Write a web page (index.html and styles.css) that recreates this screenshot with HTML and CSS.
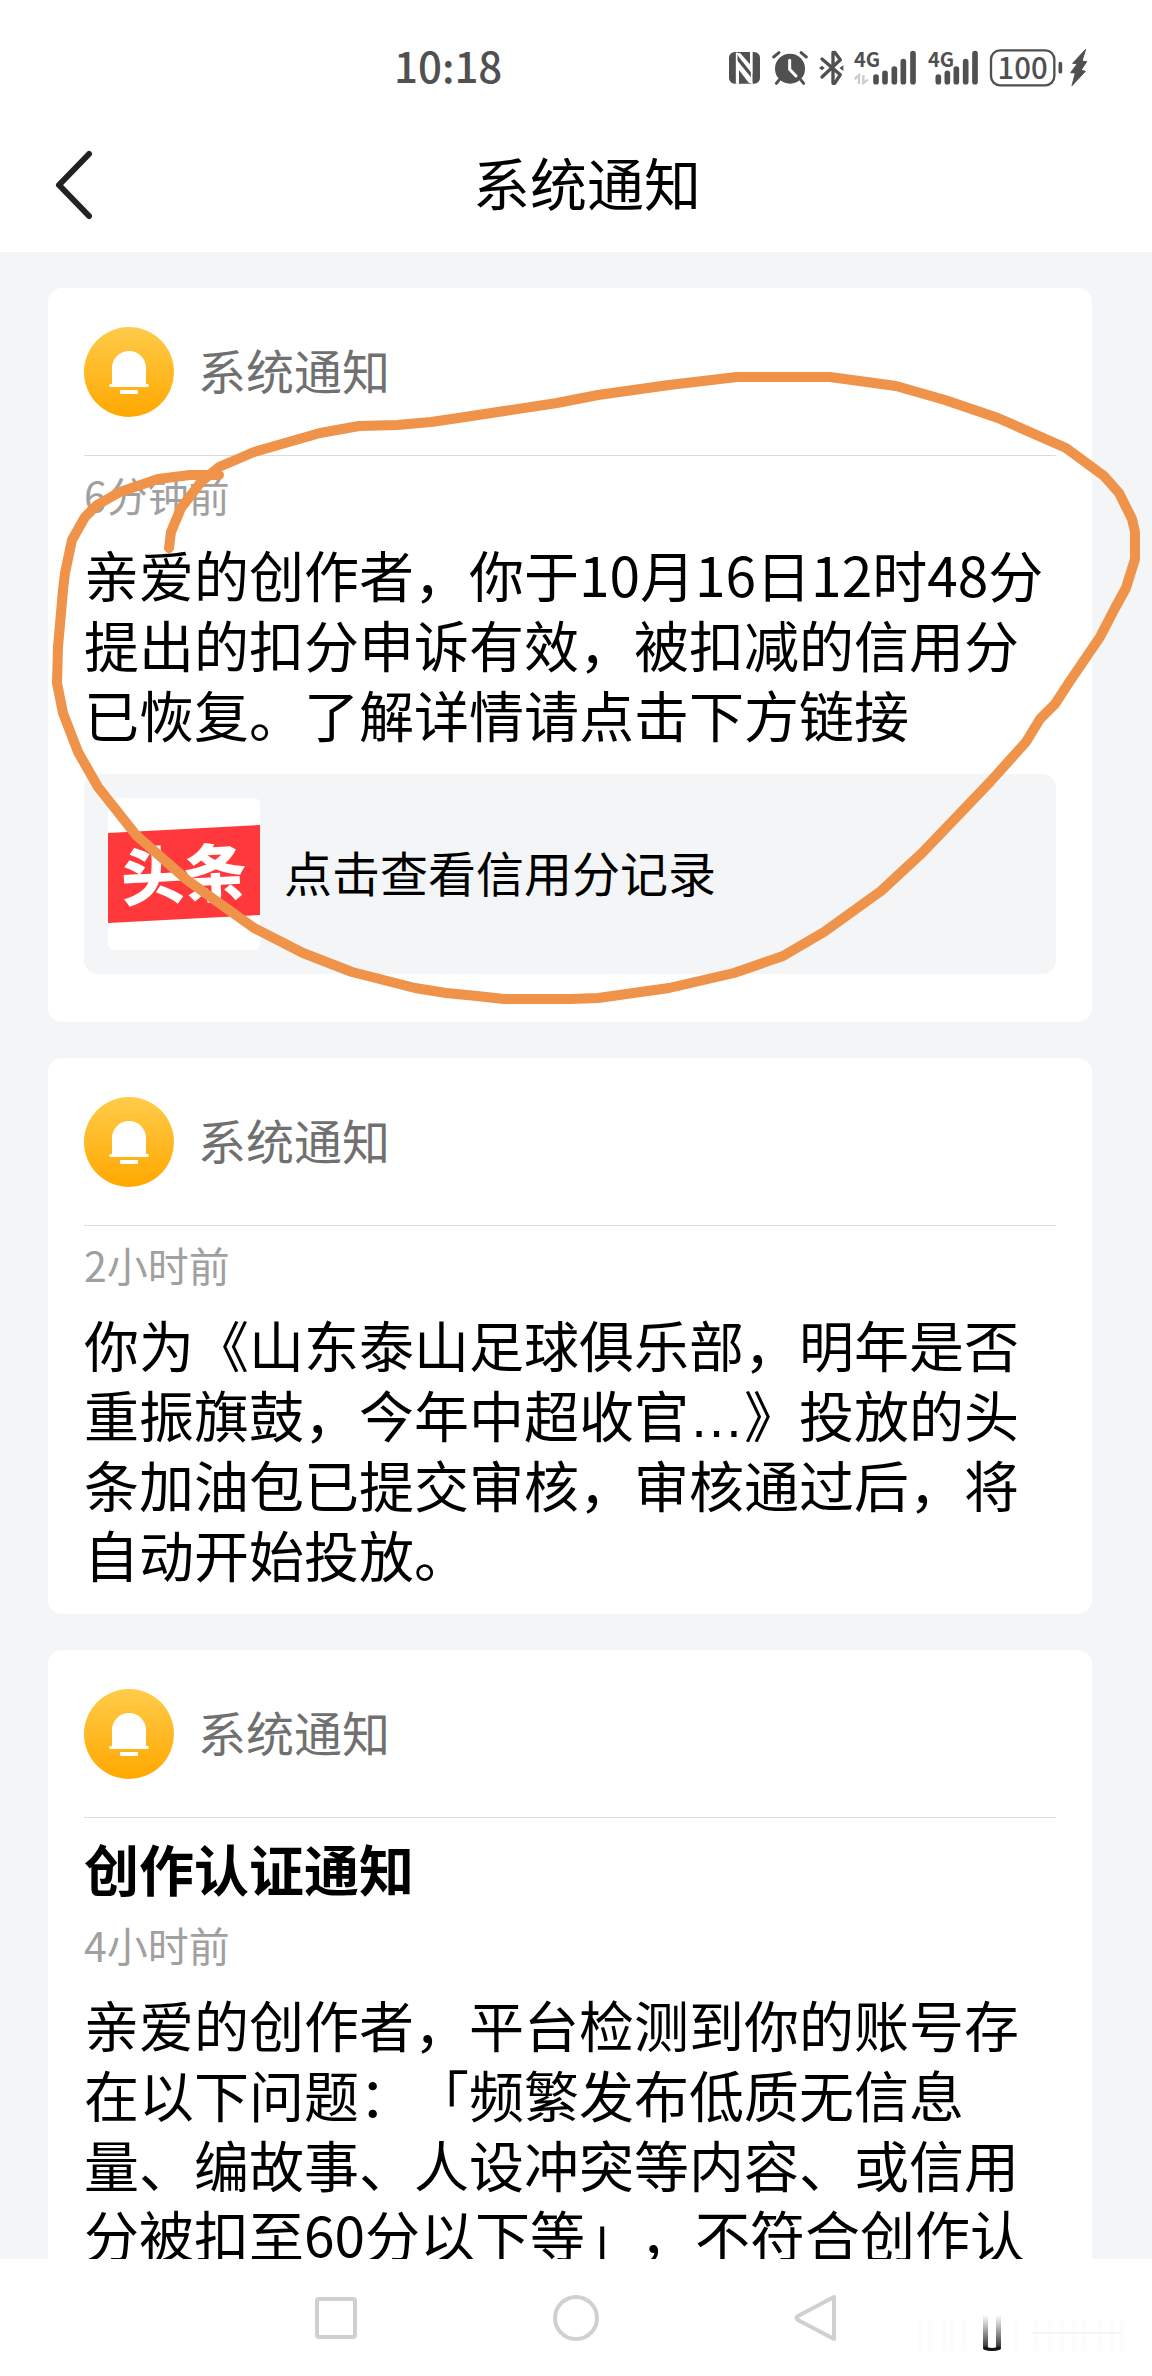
FILE: index.html
```html
<!DOCTYPE html>
<html lang="zh-CN">
<head>
<meta charset="utf-8">
<meta name="viewport" content="width=device-width, initial-scale=1">
<title>系统通知</title>
<link rel="stylesheet" href="styles.css">
</head>
<body>
<svg class="defs" width="0" height="0" aria-hidden="true">
  <defs>
    <linearGradient id="gold" x1="0" y1="0" x2="0" y2="1">
      <stop offset="0" stop-color="#ffcb4a"/>
      <stop offset="1" stop-color="#ffa800"/>
    </linearGradient>
    <linearGradient id="fade" x1="0" y1="0" x2="0" y2="1">
      <stop offset="0" stop-color="#222" stop-opacity="0"/>
      <stop offset="1" stop-color="#111" stop-opacity="0.9"/>
    </linearGradient>
    <symbol id="bell" viewBox="0 0 90 90">
      <circle cx="45" cy="45" r="45" fill="url(#gold)"/>
      <path d="M28 57V41a17 17 0 0 1 34 0v16h2a2 2 0 0 1 0 3H26a2 2 0 0 1 0-3z" fill="#fff"/>
      <rect x="36" y="63" width="18" height="4" rx="1" fill="#fff"/>
    </symbol>
  </defs>
</svg>

<div class="status">
  <time class="clock">10:18</time>
  <div class="status-icons">
    <svg width="39" height="40" viewBox="54 50 117 120">
      <rect x="57" y="65" width="93" height="95" rx="17" fill="#505050"/>
      <path d="M80 160V67M125 160V65" stroke="#fff" stroke-width="5"/>
      <path d="M79 67l12 2 29 33v-37h7v66l-40-50zM128 160l-12-3-29-38v41h-6V90l43 52z" fill="#fff"/>
    </svg>
    <svg width="47" height="40" viewBox="171 50 141 120">
      <circle cx="240" cy="115" r="45" fill="#505050"/>
      <path d="M191 80l16-13M289 80l-16-13M208 148l-9 11M272 148l9 11" stroke="#505050" stroke-width="9" stroke-linecap="round"/>
      <path d="M239 90v27l19 20" fill="none" stroke="#fff" stroke-width="9" stroke-linecap="round"/>
    </svg>
    <svg width="36" height="40" viewBox="312 50 108 120">
      <path d="M336 86l55 47-17 26h-5V66h5l17 22-55 52" fill="none" stroke="#505050" stroke-width="10" stroke-linecap="round" stroke-linejoin="round"/>
      <path d="M327 113l9-7 8 7-8 7zM388 113l12-8v17z" fill="#505050"/>
    </svg>
    <svg width="72" height="40" viewBox="420 50 216 120">
      <text x="432" y="111" class="net">4G</text>
      <path d="M498 140v14M525 129v25M553 116v38M580 94v60M609 70v84" stroke="#505050" stroke-width="17" stroke-linecap="round"/>
      <path d="M434 146l13-11v26M460 134v24l14-10" fill="none" stroke="#ccc" stroke-width="7"/>
    </svg>
    <svg width="62" height="40" viewBox="636 50 186 120">
      <text x="654" y="111" class="net">4G</text>
      <path d="M685 140v14M712 129v25M739 116v38M767 94v60M795 70v84" stroke="#505050" stroke-width="17" stroke-linecap="round"/>
    </svg>
    <svg width="83" height="40" viewBox="822 50 249 120">
      <rect x="843" y="60" width="190" height="105" rx="27" fill="none" stroke="#505050" stroke-width="7"/>
      <path d="M1051 100v24" stroke="#505050" stroke-width="11" stroke-linecap="round"/>
      <text x="938" y="146" text-anchor="middle" class="charge">100</text>
    </svg>
    <svg width="21" height="40" viewBox="1071 50 63 120">
      <path d="M1127 57l-39 42 14 1-20 27 14 1-10 38 40-43-13-3 17-26-14-2z" fill="#505050" stroke="#505050" stroke-width="3" stroke-linejoin="round"/>
    </svg>
  </div>
</div>

<header class="bar">
  <button class="back" aria-label="返回">
    <svg width="40" height="72" viewBox="0 0 40 72"><path d="M35 5L5 36l30 31" fill="none" stroke="#222" stroke-width="6" stroke-linecap="round" stroke-linejoin="round"/></svg>
  </button>
  <h1 class="bar-title">系统通知</h1>
</header>

<main class="feed">
  <article class="card">
    <div class="card-head">
      <svg class="avatar" viewBox="0 0 90 90"><use href="#bell"/></svg>
      <span class="label sender">系统通知</span>
    </div>
    <time class="when">6分钟前</time>
    <p class="message">亲爱的创作者，你于10月16日12时48分提出的扣分申诉有效，被扣减的信用分已恢复。了解详情请点击下方链接</p>
    <a class="link" href="#">
      <svg class="logo" viewBox="0 0 152 152" aria-label="头条">
        <path d="M0 35l152-8v90L0 125z" fill="#ff383c"/>
        <text x="76" y="100" text-anchor="middle" class="logo-text" transform="rotate(-3 76 76)">头条</text>
      </svg>
      <span class="label">点击查看信用分记录</span>
    </a>
  </article>

  <article class="card">
    <div class="card-head">
      <svg class="avatar" viewBox="0 0 90 90"><use href="#bell"/></svg>
      <span class="label sender">系统通知</span>
    </div>
    <time class="when">2小时前</time>
    <p class="message">你为《山东泰山足球俱乐部，明年是否重振旗鼓，今年中超收官<span class="dots">…</span>》投放的头条加油包已提交审核，审核通过后，将自动开始投放。</p>
  </article>

  <article class="card">
    <div class="card-head">
      <svg class="avatar" viewBox="0 0 90 90"><use href="#bell"/></svg>
      <span class="label sender">系统通知</span>
    </div>
    <h2 class="subject">创作认证通知</h2>
    <time class="when">4小时前</time>
    <p class="message">亲爱的创作者，平台检测到你的账号存在以下问题：「频繁发布低质无信息量、编故事、人设冲突等内容、或信用分被扣至60分以下等」，不符合创作认</p>
  </article>
</main>

<nav class="keys">
  <button class="key" aria-label="最近任务"><svg width="48" height="48" viewBox="0 0 48 48"><rect x="5" y="5" width="38" height="38" rx="2"/></svg></button>
  <button class="key" aria-label="主屏幕"><svg width="48" height="48" viewBox="0 0 48 48"><circle cx="24" cy="24" r="21"/></svg></button>
  <button class="key" aria-label="返回上级"><svg width="48" height="48" viewBox="0 0 48 48"><path d="M42 3v42L6 26q-3-2 0-4z" stroke-linejoin="round"/></svg></button>
  <svg class="smudge" width="216" height="40" viewBox="0 0 216 40" aria-hidden="true">
    <path d="M8 4v32M18 4v32M32 4v32M40 4v32M52 4v32M104 4v32M124 4v32M138 4v32M150 4v32M162 4v32M172 4v32M188 4v32M200 4v32M210 4v32" stroke="#fcfcfc" stroke-width="4"/>
    <path d="M120 18h90" stroke="#f5f5f5" stroke-width="2"/>
    <rect x="71" y="0" width="5" height="34" fill="url(#fade)"/>
    <rect x="84" y="0" width="5" height="34" fill="url(#fade)"/>
    <path d="M72 33q8 3 16 0" fill="none" stroke="#111" stroke-width="3"/>
  </svg>
</nav>

<svg class="scribble" viewBox="0 0 1152 2376" aria-hidden="true">
  <path d="M169 548L171 532L181 508L201 482L219 467L254 452L320 433L359 426L397 425L431 422L465 417L557 403L598 395L669 385L737 377H830L896 386L945 400L998 418L1066 448L1104 476L1119 493L1132 519L1135 532V559L1126 588L1115 608L1100 637L1070 681L1055 704L1040 719L1026 742L990 782L945 829L922 853L881 891L824 932L783 956L734 973L669 988L598 998L571 999H504L477 996L446 993L415 988L352 972L303 953L254 928L219 903L187 880L136 835L98 787L78 752L63 713L57 683L58 647L63 590L65 573L72 540L85 517L97 505L120 492L158 479L190 475H219"/>
</svg>
</body>
</html>
```
FILE: styles.css
```css
* {
  box-sizing: border-box;
}

body {
  position: relative;
  display: flex;
  flex-direction: column;
  height: 100vh;
  margin: 0;
  overflow: hidden;
  background: #fff;
  color: #000;
  font-family: "Noto Sans CJK SC", sans-serif;
  text-spacing-trim: space-all;
}

h1, h2, p {
  margin: 0;
}

button {
  padding: 0;
  border: 0;
  background: none;
}

svg {
  display: block;
  flex: none;
}

.defs {
  position: absolute;
}

.status {
  display: flex;
  flex: none;
  align-items: center;
  justify-content: space-between;
  height: 134px;
  padding: 0 64px 0 394px;
  color: #505050;
}

.clock {
  padding-bottom: 4px;
  font-size: 42px;
  font-weight: 500;
  line-height: 48px;
}

.status-icons {
  display: flex;
}

.status-icons svg {
  overflow: visible;
}

.net {
  fill: #505050;
  font-size: 60px;
  font-weight: 700;
}

.charge {
  fill: #505050;
  font-size: 88px;
  font-weight: 500;
}

.bar {
  display: flex;
  flex: none;
  align-items: center;
  height: 118px;
  padding: 0 72px 16px 54px;
}

.back {
  flex: none;
  width: 40px;
}

.bar-title {
  flex: 1;
  padding-bottom: 8px;
  font-size: 57px;
  font-weight: 400;
  line-height: 72px;
  text-align: center;
}

.feed {
  display: flex;
  flex: 1;
  flex-direction: column;
  gap: 36px;
  min-height: 0;
  padding: 36px 60px 0 48px;
  overflow: hidden;
  background: #f3f5f7;
}

.card {
  flex: none;
  padding: 0 36px 26px;
  border-radius: 14px;
  background: #fff;
}

.card-head {
  display: flex;
  align-items: center;
  gap: 24px;
  height: 168px;
  border-bottom: 1px solid #dcdcdc;
}

.avatar {
  width: 90px;
  height: 90px;
}

.label {
  padding-bottom: 6px;
  font-size: 48px;
  line-height: 60px;
}

.sender {
  color: #707070;
}

.subject {
  margin-top: 14px;
  font-size: 55px;
  font-weight: 700;
  line-height: 70px;
}

.when {
  display: block;
  margin: 14px 0 20px;
  color: #a0a0a0;
  font-size: 41px;
  line-height: 48px;
}

.subject + .when {
  margin-top: 18px;
}

.message {
  font-size: 55px;
  line-height: 70px;
}

.dots {
  font-family: "Liberation Sans", sans-serif;
  line-height: 1;
}

.link {
  display: flex;
  align-items: center;
  gap: 24px;
  margin: 26px 0 22px;
  padding: 24px;
  border-radius: 14px;
  background: #f3f5f7;
  color: #000;
  text-decoration: none;
}

.logo {
  width: 152px;
  height: 152px;
  border-radius: 6px;
  background: #fff;
}

.logo-text {
  fill: #fff;
  font-size: 63px;
  font-weight: 900;
}

.keys {
  position: relative;
  display: flex;
  flex: none;
  align-items: center;
  justify-content: center;
  gap: 192px;
  height: 117px;
  background: #fff;
}

.key {
  width: 48px;
  height: 48px;
  fill: none;
  stroke: #d0d0d0;
  stroke-width: 4px;
}

.smudge {
  position: absolute;
  right: 24px;
  bottom: 21px;
}

.scribble {
  position: absolute;
  top: 0;
  left: 0;
  width: 100%;
  pointer-events: none;
  fill: none;
  stroke: #ef934b;
  stroke-width: 10px;
  stroke-linecap: round;
  stroke-linejoin: round;
}
```
